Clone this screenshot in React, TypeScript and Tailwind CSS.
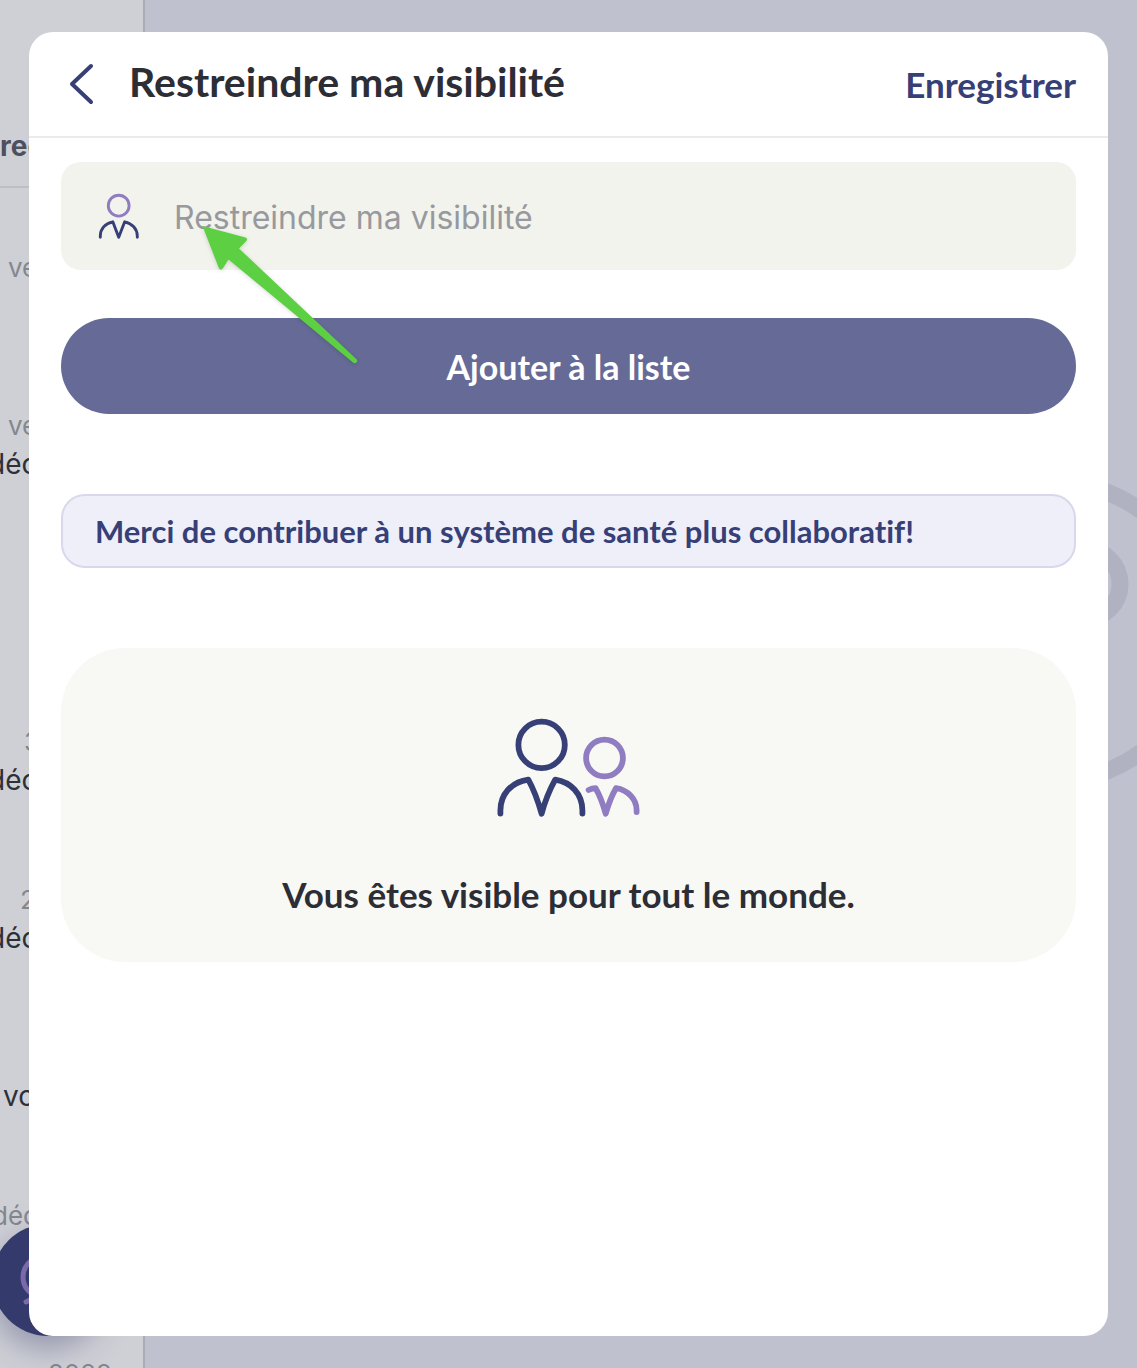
import React from "react";

type Entry = { text: string; className: string };

const entries: Entry[] = [
  { text: "ve", className: "mt-16 pl-2 text-[26px] text-[#85878f]" },
  { text: "ve", className: "mt-[126px] pl-2 text-[26px] text-[#85878f]" },
  { text: "déc", className: "mt-[6px] -ml-3 text-[28px] text-[#2e3038]" },
  { text: "3", className: "mt-[246px] pl-6 text-[26px] text-[#85878f]" },
  { text: "déc", className: "mt-[6px] -ml-3 text-[28px] text-[#2e3038]" },
  { text: "2", className: "mt-[88px] pl-5 text-[26px] text-[#85878f]" },
  { text: "déc", className: "mt-[6px] -ml-3 text-[28px] text-[#2e3038]" },
  { text: "vo", className: "mt-[126px] pl-[3px] text-[28px] text-[#2e3038]" },
  { text: "déc", className: "mt-[88px] -ml-2 text-[26px] text-[#85878f]" },
  { text: "2022", className: "mt-[126px] pl-12 text-[26px] text-[#85878f]" },
];

function Backdrop() {
  return (
    <div aria-hidden="true" className="absolute inset-0 flex overflow-hidden bg-[#bfc1ce]">
      <aside className="w-[145px] shrink-0 border-r-2 border-[#a9abb5] bg-[#cfd0d6]">
        <div className="flex h-[188px] w-full items-end overflow-hidden border-b-2 border-[#bdbec6] pb-6 text-[28px] leading-8 font-bold text-[#4d505e]">
          rec
        </div>
        <ul>
          {entries.map((e, i) => (
            <li key={i} className={e.className + " leading-8 whitespace-nowrap"}>
              {e.text}
            </li>
          ))}
        </ul>
      </aside>
      <div className="absolute bottom-8 -left-2 flex size-28 items-center justify-center rounded-full bg-[#343a6b] shadow-[0_12px_32px_rgba(52,58,107,0.4)]">
        <svg className="size-16" viewBox="0 0 64 64" fill="none" stroke="#7a6aab" strokeWidth="5" strokeLinecap="round">
          <ellipse cx="24" cy="29" rx="17" ry="19" />
          <path d="M10 54C14 53 16 50 19 48" />
        </svg>
      </div>
      <svg className="absolute top-[470px] -right-[80px] h-[322px] w-[322px]" viewBox="895 470 322 322" fill="none" stroke="#b0b2c2" strokeWidth="17">
        <circle cx="1053" cy="631.5" r="149.5" />
        <circle cx="1085" cy="584" r="35" />
      </svg>
    </div>
  );
}

function PersonIcon() {
  return (
    <svg className="h-[50px] w-11 shrink-0" viewBox="17 11 44 50" fill="none" strokeWidth="2.9" strokeLinecap="round" strokeLinejoin="round" aria-hidden="true">
      <circle cx="38.7" cy="25.7" r="10.4" stroke="#8f7cc1" />
      <path stroke="#373f77" d="M20.3 57.3V56C20.3 49 25 43.3 32.8 41.8L38.7 57.3L44.7 41.8C52 43.3 57.3 49 57.3 56V57.3" />
    </svg>
  );
}

function PeopleIcon() {
  return (
    <svg className="h-[104px] w-[148px]" viewBox="15 16 148 104" fill="none" strokeWidth="5.8" strokeLinecap="round" strokeLinejoin="round" aria-hidden="true">
      <g stroke="#373f77">
        <circle cx="61.6" cy="44.9" r="23.2" />
        <path d="M20.4 113.5V110.5C20.4 94 31.5 82 48.3 79.6C53 88 58 101 61.6 113.7C65 101 70 89 75.2 79.6C91 82 102.4 94 102.4 110.5V113.5" />
      </g>
      <g stroke="#8f7cc1">
        <circle cx="124.5" cy="58" r="18.4" />
        <path d="M108.6 90C111 88.8 113 88.3 115.6 88.2C119 94 123 104 125.7 113.7C128.5 104 132 95 136 88.2C148 90 156.6 99.5 156.6 110V112" />
      </g>
    </svg>
  );
}

export default function App() {
  return (
    <div className="relative flex min-h-screen flex-col px-[29px] py-8 font-['Inter',sans-serif]">
      <Backdrop />
      <main
        role="dialog"
        aria-labelledby="title"
        className="relative flex flex-1 flex-col rounded-3xl bg-white font-['Lato',sans-serif] [font-variant-ligatures:none]"
      >
        <header className="flex h-[106px] items-center border-b-2 border-[#ebebeb] pr-8 pl-10">
          <button type="button" aria-label="Retour" className="flex h-11 w-7 items-center">
            <svg className="h-11 w-7" viewBox="0 0 28 44" fill="none" stroke="#373f77" strokeWidth="4" strokeLinecap="round" strokeLinejoin="round">
              <path d="M22 4L3 22L22 40" />
            </svg>
          </button>
          <h1 id="title" className="ml-8 pb-1 text-[41px] leading-[48px] font-bold text-[#2c2d35]">
            Restreindre ma visibilité
          </h1>
          <button type="button" className="ml-auto text-[35px] leading-10 font-bold text-[#373f77]">
            Enregistrer
          </button>
        </header>
        <div className="flex flex-col px-8 pt-6">
          <label className="flex h-[108px] items-center gap-[33px] rounded-[20px] bg-[#f2f3ec] px-9">
            <PersonIcon />
            <input
              type="text"
              aria-label="Restreindre ma visibilité"
              placeholder="Restreindre ma visibilité"
              className="min-w-0 flex-1 bg-transparent pt-1 font-['Inter',sans-serif] text-[32px] text-[#2c2d35] outline-none placeholder:text-[#97999e]"
            />
          </label>
          <button type="button" className="mt-12 h-24 rounded-full bg-[#656b96] text-[34px] font-bold text-white">
            Ajouter à la liste
          </button>
          <p className="mt-20 rounded-3xl border-2 border-[#d9d7ec] bg-[#efeffa] px-8 py-[15px] text-[31px] leading-10 font-bold text-[#373f77]">
            Merci de contribuer à un système de santé plus collaboratif!
          </p>
          <section className="mt-20 flex h-[314px] flex-col items-center rounded-[64px] bg-[#f8f9f5] pt-[68px]">
            <PeopleIcon />
            <p className="mt-[50px] text-[35px] leading-12 font-bold text-[#2c2d35]">Vous êtes visible pour tout le monde.</p>
          </section>
        </div>
      </main>
      <svg className="pointer-events-none absolute top-[220px] left-[196px] h-[150px] w-[168px] drop-shadow-sm" viewBox="196 220 168 150" aria-hidden="true">
        <path
          fill="#5dcf43"
          d="M202.5 226L245.5 237.5Q248 238.5 246.5 240.8L239 248.5L356.5 359.2Q358 361 356.5 362.5Q354.8 364 353 362.6L228.5 259.5L222.8 268.5Q220.8 270.8 219 268.5L202.5 226Z"
        />
      </svg>
    </div>
  );
}
